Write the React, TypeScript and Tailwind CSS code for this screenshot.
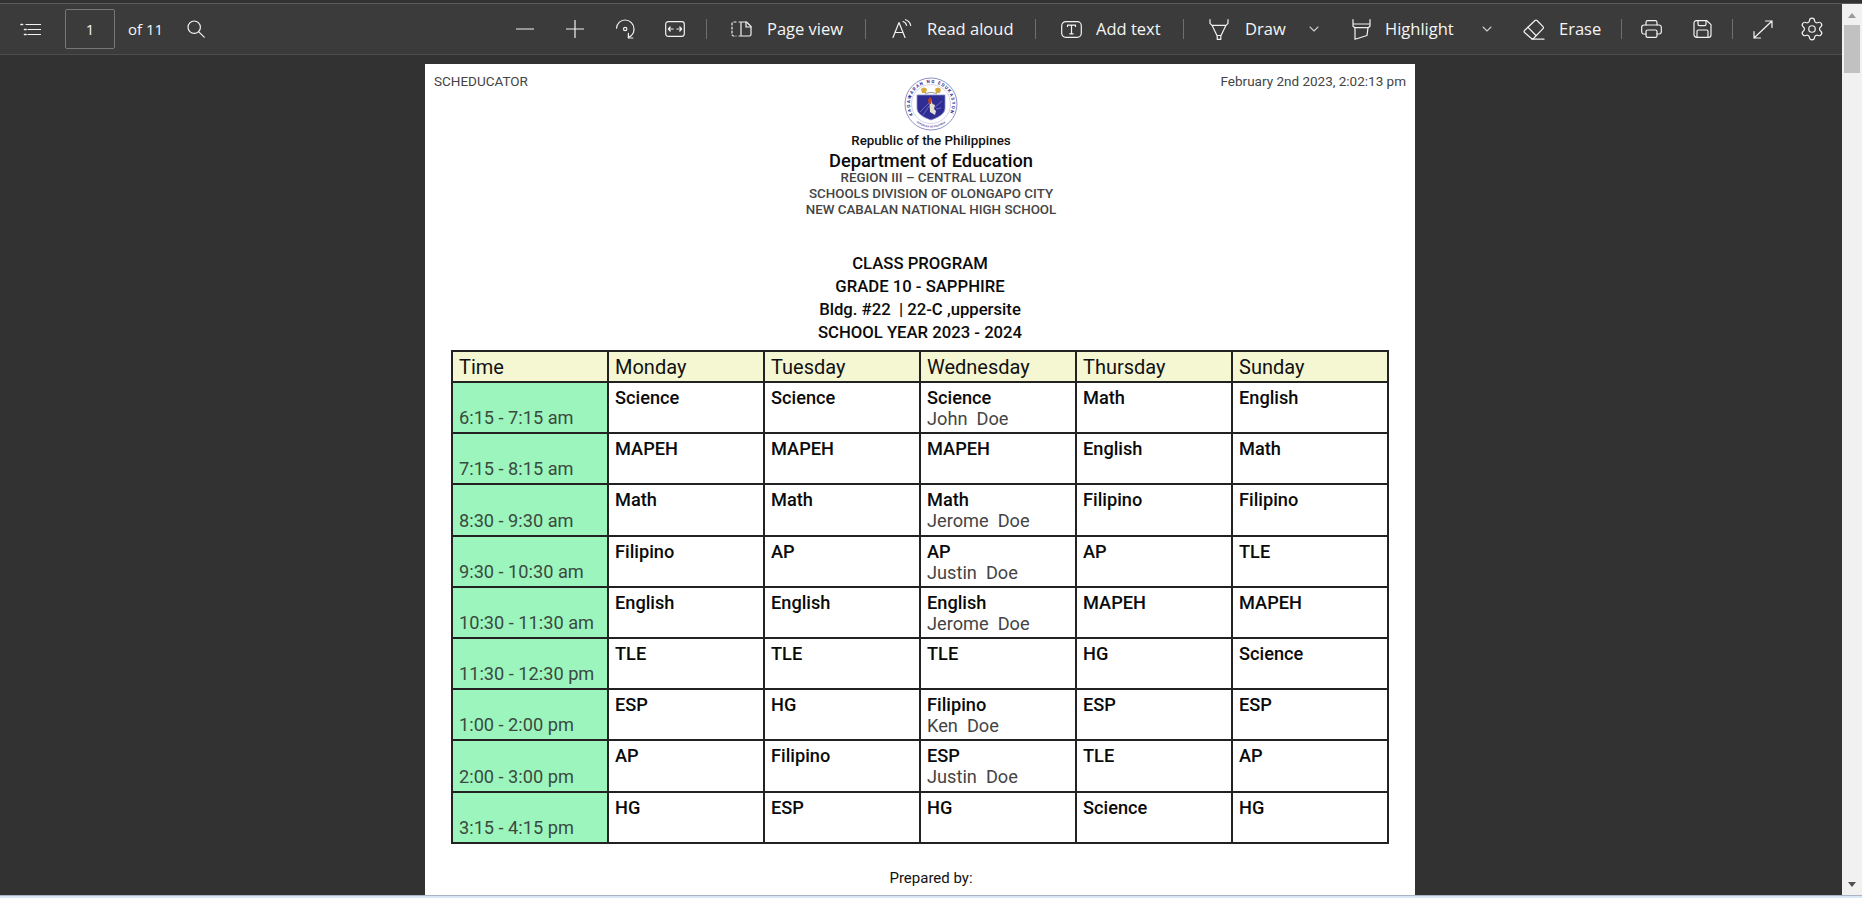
import { ReactNode } from 'react';
import { ChevronDown, Settings } from 'lucide-react';

const roboto = 'font-["Roboto",sans-serif]';

const days = ['Time', 'Monday', 'Tuesday', 'Wednesday', 'Thursday', 'Sunday'];

const rows = [
  { time: '6:15 - 7:15 am', cells: ['Science', 'Science', 'Science', 'Math', 'English'], teacher: 'John\u00a0 Doe' },
  { time: '7:15 - 8:15 am', cells: ['MAPEH', 'MAPEH', 'MAPEH', 'English', 'Math'] },
  { time: '8:30 - 9:30 am', cells: ['Math', 'Math', 'Math', 'Filipino', 'Filipino'], teacher: 'Jerome\u00a0 Doe' },
  { time: '9:30 - 10:30 am', cells: ['Filipino', 'AP', 'AP', 'AP', 'TLE'], teacher: 'Justin\u00a0 Doe' },
  { time: '10:30 - 11:30 am', cells: ['English', 'English', 'English', 'MAPEH', 'MAPEH'], teacher: 'Jerome\u00a0 Doe' },
  { time: '11:30 - 12:30 pm', cells: ['TLE', 'TLE', 'TLE', 'HG', 'Science'] },
  { time: '1:00 - 2:00 pm', cells: ['ESP', 'HG', 'Filipino', 'ESP', 'ESP'], teacher: 'Ken\u00a0 Doe' },
  { time: '2:00 - 3:00 pm', cells: ['AP', 'Filipino', 'ESP', 'TLE', 'AP'], teacher: 'Justin\u00a0 Doe' },
  { time: '3:15 - 4:15 pm', cells: ['HG', 'ESP', 'HG', 'Science', 'HG'] },
];

function Icon({ w, h, children }: { w: number; h: number; children: ReactNode }) {
  return (
    <svg width={w} height={h} viewBox={`0 0 ${w} ${h}`} fill="none" stroke="#f2f2f2" strokeWidth="1.2" strokeLinecap="round" strokeLinejoin="round">
      {children}
    </svg>
  );
}

function IconButton({ children }: { children: ReactNode }) {
  return <div className="flex h-[50px] w-[50px] shrink-0 items-center justify-center">{children}</div>;
}

function Sep({ className }: { className: string }) {
  return <div className={`h-[20px] w-px shrink-0 bg-[#6e6e6e] ${className}`} />;
}

// fixed widths keep the following icons in place whatever the font does
function Label({ children, className }: { children: ReactNode; className: string }) {
  return <span className={`shrink-0 text-[16.5px] leading-none whitespace-nowrap text-[#f5f5f5] ${className}`}>{children}</span>;
}

function Toolbar() {
  return (
    <div className='flex h-[50px] w-full items-center font-["Open_Sans",sans-serif]'>
      <div className="ml-[5px]">
        <IconButton>
          <Icon w={21} h={13}>
            <path d="M1 1.5h1.6M4.5 6.5h1.6M4.5 11.5h1.6" strokeWidth="1.6" />
            <path d="M6 1.5h15M8 6.5h13M8 11.5h13" />
          </Icon>
        </IconButton>
      </div>
      <div className="ml-[10px] flex h-[40px] w-[50px] shrink-0 items-center justify-center rounded-[2px] border border-[#777] text-[15px] text-[#f5f5f5]">1</div>
      <span className="ml-[13px] w-[34px] shrink-0 text-[15px] whitespace-nowrap text-[#f5f5f5]">of 11</span>
      <div className="ml-[9px]">
        <IconButton>
          <Icon w={18} h={18}>
            <circle cx="7.2" cy="7.2" r="6.2" />
            <path d="M11.8 11.8l5.4 5.4" />
          </Icon>
        </IconButton>
      </div>
      <div className="ml-[279px] flex items-center">
        <IconButton>
          <Icon w={18} h={4}>
            <path d="M0.5 2h17" />
          </Icon>
        </IconButton>
        <IconButton>
          <Icon w={18} h={18}>
            <path d="M0.5 9h17M9 0.5v17" />
          </Icon>
        </IconButton>
        <IconButton>
          <Icon w={21} h={21}>
            <path d="M1.5 9.2C1.8 4.5 5.5 1 10 1c5 0 9 4 9 9 0 3.8-2.2 7-5.6 8.4" />
            <circle cx="10.2" cy="10" r="1.7" />
            <path d="M13.4 14.4v4.6h4.4" />
          </Icon>
        </IconButton>
        <IconButton>
          <Icon w={20} h={16}>
            <rect x="0.7" y="0.7" width="18.6" height="14.6" rx="2.5" />
            <path d="M3.5 8h4.6M5.2 6L3.4 8l1.8 2M11.9 8h4.6M14.8 6l1.8 2-1.8 2" />
          </Icon>
        </IconButton>
      </div>
      <Sep className="ml-[6px]" />
      <div className="ml-[24px] flex shrink-0">
        <Icon w={21} h={16}>
          <path d="M5 1H2.7A1.7 1.7 0 0 0 1 2.7v10.6A1.7 1.7 0 0 0 2.7 15H5M8 1h1M8 15h1" strokeDasharray="2 2" />
          <path d="M10 1h5.5l4.5 4.5v8A1.5 1.5 0 0 1 18.5 15H10z" />
          <path d="M15 1v5h5" />
        </Icon>
      </div>
      <Label className="ml-[15px] w-[76px]">Page view</Label>
      <Sep className="ml-[22px]" />
      <div className="ml-[26px] flex shrink-0">
        <Icon w={20} h={20}>
          <path d="M1 18.5L7 3.5l6 15M3 13.5h8" />
          <path d="M11 2.5c2 .6 3.2 2 3.6 4M13.5 0.7c2.8.9 4.6 3 5.2 5.8" />
        </Icon>
      </div>
      <Label className="ml-[15px] w-[85px]">Read aloud</Label>
      <Sep className="ml-[23px]" />
      <div className="ml-[25px] flex shrink-0">
        <Icon w={21} h={17}>
          <rect x="0.7" y="0.7" width="19.6" height="15.6" rx="4" />
          <path d="M6.5 5.5V4.2h8v1.3M10.5 4.2v8.6M8.8 12.8h3.4" />
        </Icon>
      </div>
      <Label className="ml-[14px] w-[65px]">Add text</Label>
      <Sep className="ml-[22px]" />
      <div className="ml-[25px] flex shrink-0">
        <Icon w={20} h={21}>
          <path d="M1 0.7v3.6l2 2h14l2-2V0.7M3 6.3l5.2 10.7v3.3h3.6V17L17 6.3M8.2 16.5h3.6" />
        </Icon>
      </div>
      <Label className="ml-[16px] w-[39px]">Draw</Label>
      <ChevronDown className="ml-[22px] shrink-0 text-[#cccccc]" size={16} strokeWidth={1.6} />
      <div className="ml-[30px] flex shrink-0">
        <Icon w={19} h={21}>
          <path d="M1 0.7v6.5l2 1.5h13l2-1.5V0.7M1 5h17" />
          <path d="M3 8.7v11.6L15 16.5l1-7.8" />
        </Icon>
      </div>
      <Label className="ml-[14px] w-[72px]">Highlight</Label>
      <ChevronDown className="ml-[22px] shrink-0 text-[#cccccc]" size={16} strokeWidth={1.6} />
      <div className="ml-[28px] flex shrink-0">
        <Icon w={22} h={21}>
          <path d="M1.5 11.5L12 1.5a1.5 1.5 0 0 1 2 0l6 6.2a1.5 1.5 0 0 1 0 2L10.5 19.5a1.5 1.5 0 0 1-2 0L1.5 13.5a1.5 1.5 0 0 1 0-2z" />
          <path d="M5 8.3l8 8.2M9 20.2h12" />
        </Icon>
      </div>
      <Label className="ml-[14px] w-[39px]">Erase</Label>
      <Sep className="ml-[23px]" />
      <div className="ml-[19px] flex shrink-0">
        <Icon w={21} h={18}>
          <path d="M5 5V2.5A1.8 1.8 0 0 1 6.8 0.7h7.4A1.8 1.8 0 0 1 16 2.5V5" />
          <path d="M5 14H3a2.3 2.3 0 0 1-2.3-2.3V7.2A2.3 2.3 0 0 1 3 5h15a2.3 2.3 0 0 1 2.3 2.3v4.5A2.3 2.3 0 0 1 18 14h-2" />
          <rect x="5" y="10" width="11" height="7.3" rx="1.6" />
        </Icon>
      </div>
      <div className="ml-[31px] flex shrink-0">
        <Icon w={19} h={18}>
          <path d="M1 3A2.3 2.3 0 0 1 3.3 0.7h10.5L18 4.6v10.1a2.6 2.6 0 0 1-2.6 2.6H3.6A2.6 2.6 0 0 1 1 14.7z" />
          <path d="M5 0.9v3.4a1.3 1.3 0 0 0 1.3 1.3h5.4a1.3 1.3 0 0 0 1.3-1.3V0.9M4 17v-5.7A1.3 1.3 0 0 1 5.3 10h8.4a1.3 1.3 0 0 1 1.3 1.3V17" />
        </Icon>
      </div>
      <Sep className="ml-[20px]" />
      <div className="ml-[20px] flex shrink-0">
        <Icon w={20} h={19}>
          <path d="M12.5 1h6.5v6.5M19 1L1 18M1 11.5V18h6.5" />
        </Icon>
      </div>
      <Settings className="ml-[26px] shrink-0 text-[#f2f2f2]" size={26} strokeWidth={1.1} />
    </div>
  );
}

function DepedSeal() {
  return (
    <svg width="54" height="54" viewBox="0 0 54 54" className="block">
      <defs>
        <path id="sealTop" d="M9.1 38a21 21 0 1 1 35.8 0" />
        <path id="sealBottom" d="M6.65 38.75a23.5 23.5 0 0 0 40.7 0" />
      </defs>
      <circle cx="27" cy="27" r="26" fill="#fff" stroke="#8d8fc9" strokeWidth="1" />
      <circle cx="27" cy="27" r="19.5" fill="#fff" stroke="#b8b9de" strokeWidth="0.6" />
      <text fontSize="4.5" fontWeight="700" fill="#2c2e8f" fontFamily="Roboto, sans-serif">
        <textPath href="#sealTop" textLength="86" lengthAdjust="spacing">KAGAWARAN NG EDUKASYON</textPath>
      </text>
      <text fontSize="2.6" fontWeight="700" fill="#5557ac" fontFamily="Roboto, sans-serif" textAnchor="middle">
        <textPath href="#sealBottom" startOffset="50%">REPUBLIKA NG PILIPINAS</textPath>
      </text>
      <path d="M13 18h28v13c0 6-7 9.500-14 12-7-2.500-14-6-14-12z" fill="#2f2d94" stroke="#8a8ac8" strokeWidth="0.8" />
      <path d="M17 12c2-2 4-2 6 0l-1 4-4 0zM37 12c-2-2-4-2-6 0l1 4 4 0z" fill="#d9a93a" />
      <path d="M21 17c4-2 8-2 12 0" stroke="#777" strokeWidth="0.8" fill="none" />
      <path d="M27 22l-1.400 5 .4 8 5 3 1-4-2-2 1-4-2.400-1z" fill="#e6e0cf" />
      <path d="M24 23l2-3 2 3-1 4h-2z" fill="#c2451f" />
      <path d="M16 35l9-9M19 38l7-10M38 24l-7 6M37 31l-5 1" stroke="#8f90d6" strokeWidth="0.6" />
    </svg>
  );
}

function ScheduleTable() {
  return (
    <table className={`w-[938px] table-fixed border-collapse ${roboto}`}>
      <thead>
        <tr className="h-[31px]">
          {days.map((day) => (
            <th key={day} className="border-2 border-[#222] bg-[#f5f7d3] px-[6px] text-left text-[20px] leading-none font-normal text-[#111]">
              {day}
            </th>
          ))}
        </tr>
      </thead>
      <tbody>
        {rows.map((row) => (
          <tr key={row.time} className="h-[51.2px]">
            <td className="border-2 border-[#222] bg-[#9cf5bd] px-[6px] pb-[4px] align-bottom text-[18.2px] leading-[21px] whitespace-nowrap text-[#3a4a40]">
              {row.time}
            </td>
            {row.cells.map((cell, i) => (
              <td key={i} className="border-2 border-[#222] bg-white px-[6px] pt-[4px] align-top leading-[21px]">
                <div className="text-[18.2px] font-medium text-[#0a0a0a]">{cell}</div>
                {i === 2 && row.teacher && <div className="text-[18.2px] text-[#444]">{row.teacher}</div>}
              </td>
            ))}
          </tr>
        ))}
      </tbody>
    </table>
  );
}

function PdfPage() {
  return (
    <div className={`mt-[9px] ml-[425px] h-[1280px] w-[990px] shrink-0 bg-white ${roboto}`}>
      <div className="relative h-[286px]">
        <div className="absolute top-[9px] left-[9px] text-[13.5px] leading-4 text-[#444]">SCHEDUCATOR</div>
        <div className="absolute top-[9px] right-[9px] text-[13.5px] leading-4 text-[#444]">February 2nd 2023, 2:02:13 pm</div>
        <div className="flex flex-col items-center pt-[13px] pl-[22px]">
          <DepedSeal />
          <div className="mt-[2px] text-[13.4px] leading-[16px] font-medium text-[#111]">Republic of the Philippines</div>
          <div className="mt-[2px] text-[18.3px] leading-[19px] font-medium text-[#0a0a0a]">Department of Education</div>
          <div className="text-[13.35px] leading-[16px] font-medium text-[#444]">REGION III – CENTRAL LUZON</div>
          <div className="text-[13.35px] leading-[16px] font-medium text-[#444]">SCHOOLS DIVISION OF OLONGAPO CITY</div>
          <div className="text-[13.35px] leading-[16px] font-medium text-[#444]">NEW CABALAN NATIONAL HIGH SCHOOL</div>
        </div>
        <div className="absolute top-[188px] left-0 w-full text-center text-[16.7px] leading-[23px] font-medium whitespace-pre text-[#0a0a0a]">
          <div>CLASS PROGRAM</div>
          <div>GRADE 10 - SAPPHIRE</div>
          <div>Bldg. #22  | 22-C ,uppersite</div>
          <div>SCHOOL YEAR 2023 - 2024</div>
        </div>
      </div>
      <div className="pl-[26px]">
        <ScheduleTable />
      </div>
      <div className="mt-[25px] pl-[22px] text-center text-[15px] leading-[18px] text-[#111]">Prepared by:</div>
    </div>
  );
}

function Scrollbar() {
  return (
    <div className="flex w-[20px] shrink-0 flex-col items-center bg-[#f1f1f1]">
      <div className="mt-[9px] h-0 w-0 border-x-[4px] border-b-[5px] border-x-transparent border-b-[#9a9a9a]" />
      <div className="mt-[7px] h-[48px] w-[16px] bg-[#c1c1c1]" />
      <div className="mt-auto mb-[8px] h-0 w-0 border-x-[4px] border-t-[5px] border-x-transparent border-t-[#505050]" />
    </div>
  );
}

export default function App() {
  return (
    <div className="flex h-[898px] w-full flex-col overflow-hidden bg-[#323232]">
      <div className="h-[3px] shrink-0 bg-[#323232]" />
      <div className="h-px shrink-0 bg-[#5a5a5a]" />
      <div className="flex min-h-0 flex-1">
        <div className="flex min-w-0 flex-1 flex-col overflow-hidden">
          <div className="shrink-0 border-b border-[#4d4d4d] bg-[#3b3b3b]">
            <Toolbar />
          </div>
          <div className="min-h-0 flex-1 overflow-hidden">
            <PdfPage />
          </div>
        </div>
        <Scrollbar />
      </div>
      <div className="h-px shrink-0 bg-[#a9b3c2]" />
      <div className="h-[2px] shrink-0 bg-[#d9e6f6]" />
    </div>
  );
}
